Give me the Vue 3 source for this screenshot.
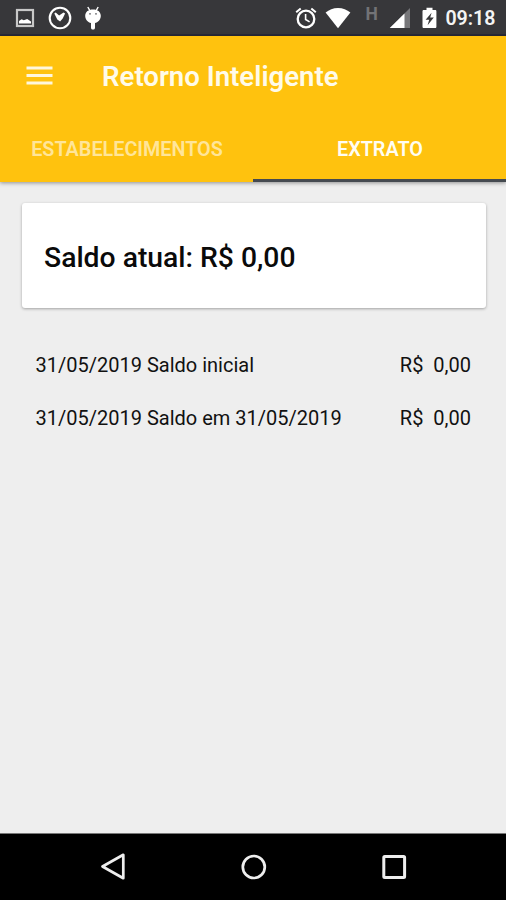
<template>
  <div class="screen">
    <div class="status-bar">
      <div class="status-left">
        <svg class="icon-picture" viewBox="0 0 20 20" width="20" height="20">
          <rect x="2" y="2" width="16" height="16" fill="none" stroke="#c8c8c8" stroke-width="2.2" />
          <path d="M4 15.5v-2.6l2.6-1.6 2.2 1 3.4-1.2 3.8 2.4v2z" fill="#fff" />
        </svg>
        <svg class="icon-clock" viewBox="0 0 24 24" width="24" height="24">
          <circle cx="12" cy="12" r="10.3" fill="none" stroke="#fff" stroke-width="2.1" />
          <path d="M6.3 7.4l1.4-.8 3.4 2.8 4.4-3 1.6 1-2.4 5.2-2.6 2.8-2.8-2z" fill="#fff" />
        </svg>
        <svg class="icon-android" viewBox="0 0 18 24" width="18" height="24">
          <path d="M3.8 1L6 4.8M14.2 1L12 4.8" stroke="#fff" stroke-width="1.4" />
          <path d="M1.2 9.8C1.2 5.6 4.6 3.4 9 3.4s7.8 2.2 7.8 6.4c0 4-3 6.6-5.8 7.2v4.8c0 1.4-.9 1.8-2 1.8s-2-.4-2-1.8V17c-2.8-.6-5.8-3.2-5.8-7.2z" fill="#fff" />
          <circle cx="6" cy="7.8" r=".9" fill="#66666a" />
          <circle cx="12" cy="7.8" r=".9" fill="#66666a" />
        </svg>
      </div>
      <div class="status-right">
        <svg class="icon-alarm" viewBox="0 0 22 22" width="22" height="22">
          <circle cx="11" cy="12" r="8.3" fill="none" stroke="#fff" stroke-width="2.3" />
          <path d="M1.2 5.2l4.5-3.8M20.8 5.2l-4.5-3.8" stroke="#fff" stroke-width="2" />
          <path d="M10.6 7v5.5l4 2.4" fill="none" stroke="#fff" stroke-width="1.6" />
        </svg>
        <svg class="icon-wifi" viewBox="0 0 26 22" width="26" height="22">
          <path d="M13 21.2L.6 5.6C4 2.5 8.2.9 13 .9s9 1.6 12.4 4.7z" fill="#fff" />
        </svg>
        <span class="network-type">H</span>
        <svg class="icon-signal" viewBox="0 0 22 22" width="22" height="22">
          <path d="M21 1v20H.8z" fill="#77777a" />
          <path d="M15.5 6.5V21H.8z" fill="#fff" />
        </svg>
        <svg class="icon-battery" viewBox="0 0 15 22" width="15" height="22">
          <path d="M4.5.8h6V3h2.7c.7 0 1.2.5 1.2 1.2v15.6c0 .8-.5 1.3-1.2 1.3H1.8c-.8 0-1.3-.5-1.3-1.3V4.2C.5 3.5 1 3 1.8 3h2.7z" fill="#fff" />
          <path d="M9.6 5.8l-6 7h3.6l-1.6 5.4 6.2-7.6H8.2z" fill="#38383a" />
        </svg>
        <span class="time">09:18</span>
      </div>
    </div>

    <header class="app-bar">
      <div class="toolbar">
        <button class="menu-btn" aria-label="Menu">
          <svg viewBox="0 0 27 20" width="27" height="20">
            <path d="M.5 2h26M.5 9.5h26M.5 17h26" stroke="#fff7dc" stroke-width="3.1" />
          </svg>
        </button>
        <h1 class="title">Retorno Inteligente</h1>
      </div>
      <nav class="tabs">
        <button
          v-for="tab in tabs"
          :key="tab"
          class="tab"
          :class="{ active: tab === activeTab }"
          @click="activeTab = tab"
        >
          <span class="tab-label">{{ tab }}</span>
        </button>
      </nav>
    </header>

    <main class="content">
      <div class="balance-card">Saldo atual: R$ 0,00</div>
      <ul class="statement">
        <li v-for="entry in entries" :key="entry.text" class="entry">
          <span>{{ entry.text }}</span>
          <span class="amount">R$&nbsp; {{ entry.value }}</span>
        </li>
      </ul>
    </main>

    <div class="nav-bar">
      <svg class="nav-back" viewBox="0 0 26 28" width="26" height="28">
        <path d="M2.5 13.5L23.3 1.8v23.4z" fill="none" stroke="#eee" stroke-width="2.7" stroke-linejoin="round" />
      </svg>
      <svg class="nav-home" viewBox="0 0 26 26" width="26" height="26">
        <circle cx="12.8" cy="13" r="11" fill="none" stroke="#eee" stroke-width="2.7" />
      </svg>
      <svg class="nav-recent" viewBox="0 0 26 26" width="26" height="26">
        <rect x="2.8" y="2.6" width="20.8" height="20.8" rx="1" fill="none" stroke="#eee" stroke-width="3" />
      </svg>
    </div>
  </div>
</template>

<script setup>
import { ref } from 'vue'

const tabs = ['ESTABELECIMENTOS', 'EXTRATO']
const activeTab = ref('EXTRATO')

const entries = [
  { text: '31/05/2019 Saldo inicial', value: '0,00' },
  { text: '31/05/2019 Saldo em 31/05/2019', value: '0,00' }
]
</script>

<style>
body {
  margin: 0;
  background: #eee;
}
</style>

<style scoped>
.screen {
  display: flex;
  flex-direction: column;
  width: 506px;
  height: 900px;
  overflow: hidden;
  background: #eee;
  font-family: Roboto, 'Liberation Sans', sans-serif;
  color: #111;
}

.screen svg {
  display: block;
  flex-shrink: 0;
}

.status-bar {
  display: flex;
  justify-content: space-between;
  box-sizing: border-box;
  height: 36px;
  padding: 0 10.5px 0 15px;
  background: #37373a;
  border-bottom: 2px solid #292a38;
}

.status-left,
.status-right {
  display: flex;
  align-items: center;
  padding-top: 2px;
}

.icon-clock {
  margin-left: 13px;
}

.icon-android {
  margin-left: 12px;
}

.icon-wifi {
  margin-left: 8px;
}

.network-type {
  margin: 0 11px 9px 15px;
  font-size: 17.5px;
  line-height: 20px;
  font-weight: 700;
  color: #737376;
}

.icon-battery {
  margin-left: 11px;
}

.time {
  margin: 2px 0 0 8.5px;
  font-size: 19.6px;
  line-height: 24px;
  font-weight: 600;
  color: #f4f4f4;
}

.app-bar {
  height: 146px;
  background: #ffc20e;
  box-shadow: 0 1px 4px rgba(0, 0, 0, 0.4);
}

.toolbar {
  display: flex;
  align-items: center;
  height: 80px;
  padding-left: 26px;
}

.menu-btn {
  padding: 0;
  border: none;
  background: transparent;
  cursor: pointer;
}

.title {
  margin: 2px 0 0 49px;
  font-size: 27.6px;
  line-height: 32px;
  font-weight: 600;
  color: #fffbe9;
}

.tabs {
  display: flex;
  height: 66px;
}

.tab {
  flex: 1;
  box-sizing: border-box;
  padding: 4px 0 0 1px;
  border: none;
  border-bottom: 3px solid transparent;
  background: transparent;
  font-family: inherit;
  font-size: 19.8px;
  font-weight: 600;
  color: #ffe599;
  cursor: pointer;
}

.tab.active {
  border-bottom-color: #454a50;
  color: #fffdf2;
}

.content {
  flex: 1;
  padding: 21px 20px 0 22px;
}

.balance-card {
  box-sizing: border-box;
  height: 105px;
  padding: 1px 22px 0;
  border-radius: 3px;
  background: #fff;
  box-shadow: 0 1px 3px rgba(0, 0, 0, 0.32);
  font-size: 28.3px;
  line-height: 108px;
  font-weight: 500;
  color: #0a0a0a;
}

.statement {
  margin: 31px 0 0;
  padding: 0 15px 0 13.5px;
  list-style: none;
}

.entry {
  display: flex;
  justify-content: space-between;
  font-size: 20px;
  line-height: 53px;
}

.nav-bar {
  display: flex;
  justify-content: space-between;
  align-items: center;
  box-sizing: border-box;
  height: 67px;
  padding: 0 99px 0 100px;
  background: #000;
  border-top: 1px solid #777;
}
</style>
